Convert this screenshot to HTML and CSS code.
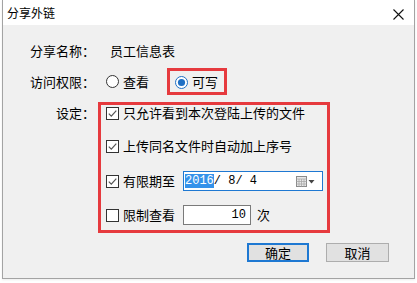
FILE: index.html
```html
<!DOCTYPE html>
<html lang="zh-CN">
<head>
<meta charset="utf-8">
<title>分享外链</title>
<link rel="stylesheet" href="styles.css">
</head>
<body>
<div class="screen">
  <div class="window">
    <div class="titlebar">
      <span class="title">分享外链</span>
      <svg class="close" width="11" height="11" viewBox="0 0 11 11"><path d="M0.5 0.5 L10.5 10.5 M10.5 0.5 L0.5 10.5" stroke="#111" stroke-width="1.1" fill="none"/></svg>
    </div>
    <div class="content">
      <div class="row row-name">
        <span class="label">分享名称：</span>
        <span class="value">员工信息表</span>
      </div>
      <div class="row row-perm">
        <span class="label">访问权限：</span>
        <div class="radios">
          <label class="radio">
            <svg width="13" height="13" viewBox="0 0 13 13"><circle cx="6.5" cy="6.5" r="6" fill="#fff" stroke="#333" stroke-width="1"/></svg>
            <span>查看</span>
          </label>
          <div class="mark mark-small">
            <label class="radio">
              <svg width="13" height="13" viewBox="0 0 13 13"><circle cx="6.5" cy="6.5" r="6" fill="#fff" stroke="#1f6fc4" stroke-width="1"/><circle cx="6.5" cy="6.5" r="3.6" fill="#1f6fc4"/></svg>
              <span>可写</span>
            </label>
          </div>
        </div>
      </div>
      <div class="row row-set">
        <span class="label label-set">设定：</span>
        <div class="mark mark-big">
          <div class="opt opt1">
            <svg class="cb" width="13" height="13" viewBox="0 0 13 13"><rect x="0.5" y="0.5" width="12" height="12" fill="#fff" stroke="#333"/><path d="M2.8 6.6 L5.3 9.2 L10.3 3.6" fill="none" stroke="#555" stroke-width="1.2"/></svg>
            <span>只允许看到本次登陆上传的文件</span>
          </div>
          <div class="opt opt2">
            <svg class="cb" width="13" height="13" viewBox="0 0 13 13"><rect x="0.5" y="0.5" width="12" height="12" fill="#fff" stroke="#333"/><path d="M2.8 6.6 L5.3 9.2 L10.3 3.6" fill="none" stroke="#555" stroke-width="1.2"/></svg>
            <span>上传同名文件时自动加上序号</span>
          </div>
          <div class="opt opt3">
            <svg class="cb" width="13" height="13" viewBox="0 0 13 13"><rect x="0.5" y="0.5" width="12" height="12" fill="#fff" stroke="#333"/><path d="M2.8 6.6 L5.3 9.2 L10.3 3.6" fill="none" stroke="#555" stroke-width="1.2"/></svg>
            <span class="opt-text">有限期至</span>
            <div class="datefield">
              <span class="sel">2016</span><span class="rest">/ 8/ 4</span>
              <svg class="cal" width="20" height="11" viewBox="0 0 20 11">
                <rect x="0.5" y="0.5" width="10" height="10" fill="#e8e8e8" stroke="#8a8a8a"/>
                <path d="M0.5 3 H10.5 M3 3 V10.5 M5.5 3 V10.5 M8 3 V10.5 M0.5 5.5 H10.5 M0.5 8 H10.5" stroke="#a8a8a8" stroke-width="0.8" fill="none"/>
                <path d="M12.5 4 H18.5 L15.5 7.5 Z" fill="#444"/>
              </svg>
            </div>
          </div>
          <div class="opt opt4">
            <svg class="cb" width="13" height="13" viewBox="0 0 13 13"><rect x="0.5" y="0.5" width="12" height="12" fill="#fff" stroke="#333"/></svg>
            <span class="opt-text">限制查看</span>
            <div class="countfield">10</div>
            <span class="unit">次</span>
          </div>
        </div>
      </div>
      <div class="buttons">
        <button class="btn btn-default">确定</button>
        <button class="btn">取消</button>
      </div>
    </div>
  </div>
</div>
</body>
</html>
```
FILE: styles.css
```css
* { box-sizing: border-box; }
html, body { margin: 0; padding: 0; }
body {
  width: 417px;
  height: 283px;
  background: #f8f8f8;
  font-family: "Noto Sans CJK SC", "Noto Sans", sans-serif;
  font-size: 13px;
  color: #000;
  overflow: hidden;
}
.screen {
  padding-left: 2px;
  background: #ffffff;
  height: 283px;
}
.window {
  width: 413px;
  height: 279px;
  border: 1px solid #a3a3a3;
  border-top: none;
  display: flex;
  flex-direction: column;
  box-shadow: 0 1px 2px rgba(0,0,0,0.08);
}
.titlebar {
  height: 25px;
  background: #fff;
  display: flex;
  align-items: center;
  justify-content: space-between;
  padding: 1px 10px 0 4px;
}
.title { font-size: 12px; line-height: 14px; }
.close { display: block; margin-top: 2px; }
.content {
  flex: 1;
  background: #f0f0f0;
  padding: 16px 0 0 27px;
  display: flex;
  flex-direction: column;
}
.row { display: flex; }
.label {
  width: 65px;
  text-align: right;
  line-height: 16px;
  white-space: nowrap;
}
.row-name { height: 20px; align-items: center; }
.value { padding-left: 15px; line-height: 16px; }
.row-perm { margin-top: 7px; height: 27px; align-items: center; }
.radios { display: flex; align-items: center; padding-left: 11px; }
.radio { display: flex; align-items: center; gap: 4px; line-height: 16px; }
.radio svg { display: block; }
.mark { border: 3px solid #e63a3e; }
.mark-small {
  margin-left: 18px;
  height: 27px;
  width: 60px;
  display: flex;
  align-items: center;
  padding-left: 5px;
  padding-top: 1px;
}
.row-set { margin-top: 7px; align-items: flex-start; }
.label-set { margin-top: 3px; }
.mark-big {
  margin-left: 3px;
  width: 232px;
  height: 131px;
  padding-left: 5px;
  display: flex;
  flex-direction: column;
}
.opt { display: flex; align-items: center; line-height: 16px; }
.cb { display: block; margin-right: 4px; flex: none; }
.opt1 { height: 16px; }
.opt2 { height: 16px; margin-top: 17px; }
.opt3 { height: 20px; margin-top: 17px; }
.opt4 { height: 20px; margin-top: 14px; }
.opt-text { width: 52px; }
.datefield {
  margin-left: 8px;
  width: 140px;
  height: 20px;
  background: #fff;
  border: 1px solid #1e78d2;
  display: flex;
  align-items: center;
  padding-left: 1px;
  font-family: "Liberation Mono", "DejaVu Sans Mono", monospace;
  font-size: 12px;
}
.sel { background: #3592ea; color: #fff; line-height: 14px; }
.rest { line-height: 14px; }
.cal { display: block; margin-left: auto; margin-right: 6px; margin-top: 1px; }
.countfield {
  margin-left: 8px;
  width: 68px;
  height: 20px;
  background: #fff;
  border: 1px solid #7a7a7a;
  text-align: right;
  padding-right: 4px;
  font-family: "Liberation Mono", "DejaVu Sans Mono", monospace;
  font-size: 12px;
  line-height: 18px;
}
.unit { margin-left: 6px; }
.buttons {
  margin-top: 10px;
  display: flex;
  justify-content: flex-end;
  gap: 17px;
  padding-right: 25px;
}
.btn {
  width: 63px;
  height: 19px;
  background: #e1e1e1;
  border: 1px solid #adadad;
  font-family: "Noto Sans CJK SC", sans-serif;
  font-size: 13px;
  line-height: 15px;
  padding: 0;
  color: #000;
}
.btn-default { width: 62px; border: 2px solid #1e78d2; }
```
